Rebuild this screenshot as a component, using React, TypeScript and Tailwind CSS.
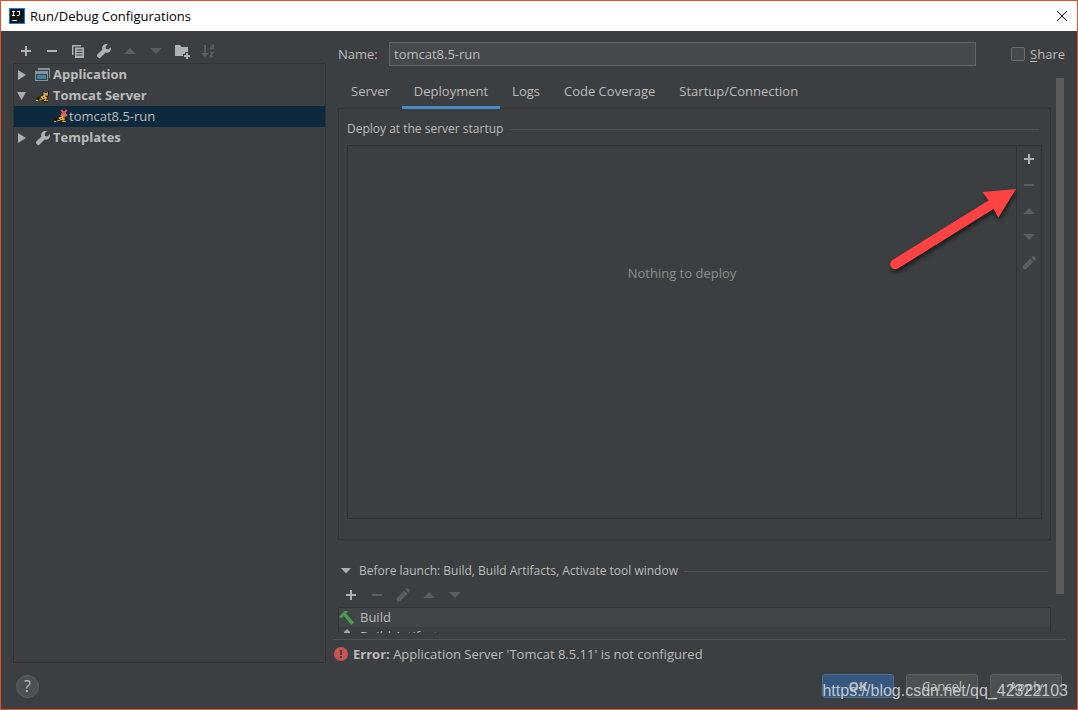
import React from "react";

const text13 = "text-[13px] leading-[18px]";

function Plus() {
  return (
    <svg width="16" height="16" viewBox="0 0 16 16" className="fill-[#afb1b3]" aria-hidden="true">
      <path d="M7 3h2v4h4v2H9v4H7V9H3V7h4z" />
    </svg>
  );
}

function Minus({ dim }: { dim?: boolean }) {
  return (
    <svg width="16" height="16" viewBox="0 0 16 16" className={dim ? "fill-[#5b5d5f]" : "fill-[#afb1b3]"} aria-hidden="true">
      <path d="M3 7h10v2H3z" />
    </svg>
  );
}

function Up() {
  return (
    <svg width="16" height="16" viewBox="0 0 16 16" className="fill-[#5b5d5f]" aria-hidden="true">
      <path d="M2 11l6-6 6 6z" />
    </svg>
  );
}

function Down() {
  return (
    <svg width="16" height="16" viewBox="0 0 16 16" className="fill-[#5b5d5f]" aria-hidden="true">
      <path d="M2 5l6 6 6-6z" />
    </svg>
  );
}

function Pencil() {
  return (
    <svg width="16" height="16" viewBox="0 0 16 16" className="fill-[#5b5d5f]" aria-hidden="true">
      <path d="M9.300 3.500L12.500 6.700 5 14.200H1.800V11zM10.300 2.500l1-1a1.400 1.400 0 0 1 2 0l1.200 1.200a1.400 1.400 0 0 1 0 2l-1 1z" />
    </svg>
  );
}

function Wrench() {
  return (
    <svg width="16" height="16" viewBox="0 0 16 16" className="fill-[#afb1b3]" aria-hidden="true">
      <path d="M14.700 4.200l-2.400 2.300-2.300-.5-.5-2.300 2.300-2.400C10.200.8 8.400 1.200 7.300 2.300 6.200 3.400 5.900 5 6.400 6.400L1.400 11.400a1.700 1.700 0 0 0 0 2.300l.9.900a1.700 1.700 0 0 0 2.300 0l5-5c1.400.5 3 .2 4.100-.9 1.100-1.100 1.500-3 1-4.500z" />
    </svg>
  );
}

function Copy() {
  return (
    <svg width="16" height="16" viewBox="0 0 16 16" aria-hidden="true">
      <path fill="#afb1b3" d="M2 2h9v1.500H3.500V12H2z" />
      <path fill="#afb1b3" fillRule="evenodd" d="M5 4.500h9V15H5zM6.500 6.500v1h6v-1zm0 2.500v1h6V9zm0 2.500v1h6v-1z" />
    </svg>
  );
}

function FolderPlus() {
  return (
    <svg width="16" height="16" viewBox="0 0 16 16" className="fill-[#afb1b3]" aria-hidden="true">
      <path d="M1 2h5l1.500 2H14v5h-3v2H9v2H1z" />
      <path d="M12 10h2v2h2v2h-2v2h-2v-2h-2v-2h2z" />
    </svg>
  );
}

function SortAZ() {
  return (
    <svg width="16" height="16" viewBox="0 0 16 16" fill="none" stroke="#5b5d5f" aria-hidden="true">
      <path fill="#5b5d5f" stroke="none" d="M4 2h2v8h3l-4 4-4-4h3z" />
      <path strokeWidth="1.400" d="M10.500 2.200q2.800-1 2.800.8v3M13.300 4q-3-.2-3 1.100t3 .1M10 9.500h3.200l-3 4h3.500" />
    </svg>
  );
}

function AppIcon() {
  return (
    <svg width="16" height="16" viewBox="0 0 16 16" aria-hidden="true">
      <path fill="#87939a" d="M3 1h12v10h-1V3H3z" />
      <path fill="#87939a" fillRule="evenodd" d="M0 4h13v10H0zm1 3v6h11V7z" />
      <path fill="#3b87a5" d="M2 8h9v4H2z" />
    </svg>
  );
}

function Tomcat({ broken }: { broken?: boolean }) {
  return (
    <svg width="16" height="16" viewBox="0 0 16 16" aria-hidden="true">
      <path fill="#1d1a12" d="M1 10l3-1 3-2 1-4 2 1h2l2-1v4l-2 3-1 3h2v1H9l-3-2-3 1-2 1v-2l2-1z" />
      <path fill="#d9a62e" d="M5 9l4-2 2 1 1 2-1 2-2-1-3 1-3 .5 2-1.500 2-.5z" />
      <path fill="#e3c46a" d="M8.500 4l1.500 1h1.500L13 4v3l-1.500 1.500H10L8.500 7z" />
      <path stroke="#26200f" strokeWidth=".8" d="M9.500 6h1M11.500 6h1M10 8h2M6 10l1 1M8 9l1 1" />
      <path fill="#d9a62e" d="M9 12h4v1H9zM1 12h2v1H1z" />
      {broken && <path stroke="#e0565b" strokeWidth="2" d="M8 1l6 6M14 1L8 7" />}
    </svg>
  );
}

function Hammer() {
  return (
    <svg width="16" height="16" viewBox="0 0 16 16" className="fill-[#499c54]" aria-hidden="true">
      <path d="M0 7l5.500-6H9L7 3.500 15 12.500 12.500 15 4.800 6 2.500 8.500z" />
    </svg>
  );
}

function Twist({ open }: { open?: boolean }) {
  return (
    <svg width="10" height="10" viewBox="0 0 10 10" className="fill-[#adadad]" aria-hidden="true">
      {open ? <path d="M0 1h9L4.500 9z" /> : <path d="M1 0v10l8-5z" />}
    </svg>
  );
}

function Tool({ label, children, disabled }: { label: string; children: React.ReactNode; disabled?: boolean }) {
  return (
    <button type="button" aria-label={label} disabled={disabled} className="flex h-[26px] w-[26px] shrink-0 items-center justify-center">
      {children}
    </button>
  );
}

function TreeRow({ icon, label, open }: { icon: React.ReactNode; label: string; open?: boolean }) {
  return (
    <div className="flex h-[21px] items-center pl-[3px]">
      <Twist open={open} />
      <span className="ml-2 mr-[2px]">{icon}</span>
      <span className="pb-px font-bold">{label}</span>
    </div>
  );
}

const tabs = ["Server", "Deployment", "Logs", "Code Coverage", "Startup/Connection"];

export default function App() {
  return (
    <div className={`relative flex h-screen min-h-[480px] flex-col overflow-hidden border border-[#dc5427] bg-[#3c3f41] font-['Open_Sans','Noto_Sans',sans-serif] text-[#bbbbbb] ${text13}`}>
      <header className="flex h-[30px] shrink-0 items-center bg-white pl-2 pr-[7px] text-black">
        <svg width="16" height="16" viewBox="0 0 16 16" aria-hidden="true">
          <path fill="#087cfa" d="M0 0h16v16H0z" />
          <path fill="#111111" d="M1 1h14v14H1z" />
          <path stroke="#ffffff" fill="none" d="M3 3.500h3M4.500 3v4M3 7.500h3M8 3.500h3M10.500 3v3.500q0 1-1 1H8M3 12.500h5" />
        </svg>
        <h1 className="ml-[5px] flex-1 pb-px">Run/Debug Configurations</h1>
        <button type="button" aria-label="Close" className="flex h-4 w-4 items-center justify-center">
          <svg width="12" height="12" viewBox="0 0 12 12" stroke="#000000" fill="none" aria-hidden="true">
            <path d="M1 1l10 10M11 1L1 11" />
          </svg>
        </button>
      </header>

      <main className="flex min-h-0 flex-1 pl-3 pr-3">
        <aside className="flex w-[313px] shrink-0 flex-col pt-[7px]">
          <div className="-mb-px flex shrink-0" role="toolbar" aria-label="Configuration actions">
            <Tool label="Add"><Plus /></Tool>
            <Tool label="Remove"><Minus /></Tool>
            <Tool label="Copy"><Copy /></Tool>
            <Tool label="Edit templates"><Wrench /></Tool>
            <Tool label="Move up" disabled><Up /></Tool>
            <Tool label="Move down" disabled><Down /></Tool>
            <Tool label="Create folder"><FolderPlus /></Tool>
            <Tool label="Sort" disabled><SortAZ /></Tool>
          </div>
          <nav aria-label="Configurations" className="min-h-0 flex-1 border border-[#323232]">
            <TreeRow icon={<AppIcon />} label="Application" />
            <TreeRow icon={<Tomcat />} label="Tomcat Server" open />
            <div className="flex h-[21px] items-center bg-[#0d293e] pl-[39px]">
              <Tomcat broken />
              <span className="pb-px">tomcat8.5-run</span>
            </div>
            <TreeRow icon={<Wrench />} label="Templates" />
          </nav>
        </aside>

        <section className="ml-[7px] flex min-w-0 flex-1 flex-col pt-[11px]">
          <div className="flex h-6 shrink-0 items-center pl-[5px]">
            <label htmlFor="name" className="w-[51px]">Name:</label>
            <input id="name" defaultValue="tomcat8.5-run" className="h-6 min-w-0 flex-1 border border-[#646464] bg-[#45494a] px-1 outline-none" />
            <label className="ml-[35px] flex items-center">
              <input type="checkbox" className="h-[14px] w-[14px] appearance-none rounded-[2px] border border-[#6b6b6b] bg-[#43494a]" />
              <span className="ml-[5px]"><u className="underline-offset-2">S</u>hare</span>
            </label>
          </div>

          <div className="mt-3 flex min-h-0 flex-1">
            <div className="flex min-w-0 flex-1 flex-col pl-[5px]">
              <div className="flex h-[31px] shrink-0 pl-px" role="tablist">
                {tabs.map((t) => (
                  <button
                    key={t}
                    type="button"
                    role="tab"
                    aria-selected={t === "Deployment"}
                    className={
                      t === "Deployment"
                        ? "relative z-10 border-b-[3px] border-[#4a88c7] px-3 pb-[2px]"
                        : "border-b-[3px] border-transparent px-3 pb-[2px]"
                    }
                  >
                    {t}
                  </button>
                ))}
              </div>

              <div className="-mt-px flex min-h-0 flex-1 flex-col border border-[#323232] px-2 pb-5 pt-[11px]">
                <div className="flex items-center">
                  <h2 className="text-xs leading-[18px]">Deploy at the server startup</h2>
                  <div className="ml-[7px] mr-[3px] h-px flex-1 bg-[#515151]" />
                </div>
                <div className="mt-[7px] flex min-h-0 flex-1 border border-[#323232]">
                  <p className="flex-1 pt-[118px] text-center text-[#8b8d8e]">Nothing to deploy</p>
                  <div className="flex w-[25px] flex-col items-center border-l border-[#323232]" role="toolbar" aria-label="Deployment actions">
                    <Tool label="Add artifact"><Plus /></Tool>
                    <Tool label="Remove artifact" disabled><Minus dim /></Tool>
                    <Tool label="Move artifact up" disabled><Up /></Tool>
                    <Tool label="Move artifact down" disabled><Down /></Tool>
                    <Tool label="Edit artifact" disabled><Pencil /></Tool>
                  </div>
                </div>
              </div>

              <div className="mt-[22px] flex shrink-0 items-center pl-[3px] pr-[3px]">
                <svg width="10" height="6" viewBox="0 0 10 6" className="fill-[#afb1b3]" aria-hidden="true">
                  <path d="M0 0h10L5 5.500z" />
                </svg>
                <h2 className="ml-2 text-xs leading-[18px]">Before launch: Build, Build Artifacts, Activate tool window</h2>
                <div className="ml-[6px] h-px flex-1 bg-[#515151]" />
              </div>
              <div className="-mb-px mt-[2px] flex shrink-0" role="toolbar" aria-label="Before launch actions">
                <Tool label="Add task"><Plus /></Tool>
                <Tool label="Remove task" disabled><Minus dim /></Tool>
                <Tool label="Edit task" disabled><Pencil /></Tool>
                <Tool label="Move task up" disabled><Up /></Tool>
                <Tool label="Move task down" disabled><Down /></Tool>
              </div>
              <ul className="h-[26px] shrink-0 overflow-hidden border-x border-t border-[#323232]">
                <li className="flex h-[19px] items-center bg-[#414547]"><Hammer /><span className="ml-[5px] pb-px">Build</span></li>
                <li className="flex h-[18px] items-center">
                  <svg width="16" height="16" viewBox="0 0 16 16" className="fill-[#9aa7b0]" aria-hidden="true">
                    <path d="M8 1l3 3v3H5V4zM1 9h6v6H1zM9 9h6v6H9z" />
                  </svg>
                  <span className="ml-[5px]">Build Artifacts</span>
                </li>
              </ul>
            </div>
            <div className="ml-[5px] mr-px w-2 shrink-0">
              <div className="h-[93%] bg-[#595b5d]" />
            </div>
          </div>

          <div className="mt-[6px] flex h-6 shrink-0 items-center border-t border-[#515151] pt-[5px]">
            <svg width="16" height="16" viewBox="0 0 16 16" aria-hidden="true">
              <circle cx="8" cy="8" r="7" fill="#c75450" />
              <path fill="#3c3f41" d="M7 4h2v5H7zM7 10h2v2H7z" />
            </svg>
            <p className="ml-1"><b>Error:</b> Application Server 'Tomcat 8.5.11' is not configured</p>
          </div>
        </section>
      </main>

      <footer className="flex h-[46px] shrink-0 items-center justify-between pl-[15px] pr-[15px]">
        <button type="button" aria-label="Help" className="flex h-[23px] w-[23px] items-center justify-center rounded-full border border-[#5e6060] bg-[#4c5052] text-base font-medium">?</button>
        <div className="flex gap-3">
          <button type="button" className="h-6 w-[72px] rounded-[3px] border border-[#4c708c] bg-[#365880] font-bold">OK</button>
          <button type="button" className="h-6 w-[72px] rounded-[3px] border border-[#5e6060] bg-[#4c5052]">Cancel</button>
          <button type="button" className="h-6 w-[72px] rounded-[3px] border border-[#5e6060] bg-[#4c5052]">Apply</button>
        </div>
      </footer>

      <svg width="136" height="92" viewBox="0 0 136 92" className="absolute right-[56px] top-[184px] drop-shadow-[1px_3px_2px_rgba(0,0,0,0.6)]" aria-hidden="true">
        <path fill="#ff4343" d="M131 4L97.500 7l6 8.500L7.500 75a5 5 0 0 0 5.500 8.500L108.500 24l5 8.500z" />
      </svg>
      <p className="pointer-events-none absolute bottom-[9px] right-[9px] font-['Liberation_Sans',sans-serif] text-base leading-[18px] text-[#d4d6d8]/90">
        https://blog.csdn.net/qq_42322103
      </p>
    </div>
  );
}
